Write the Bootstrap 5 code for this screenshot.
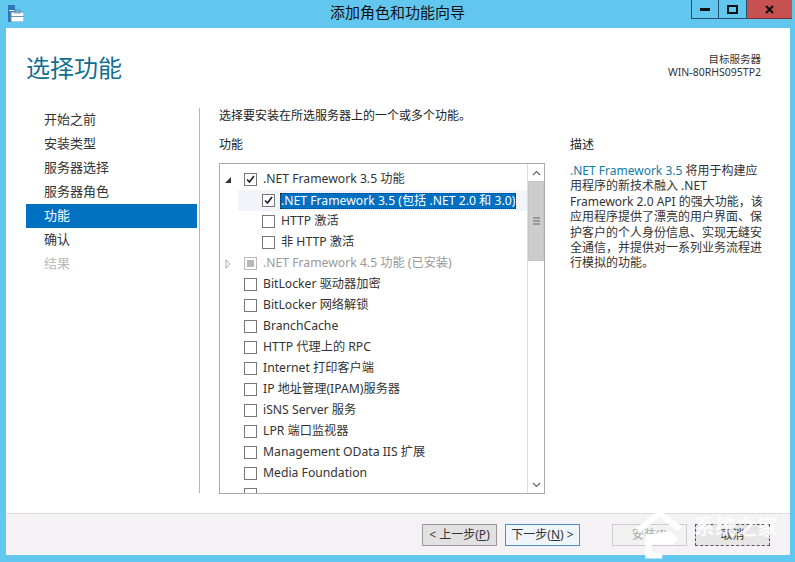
<!DOCTYPE html>
<html lang="zh">
<head>
<meta charset="utf-8">
<link href="https://cdn.jsdelivr.net/npm/bootstrap@5.3.0/dist/css/bootstrap.min.css" rel="stylesheet">
<style>
html,body{margin:0;height:562px;overflow:hidden}
body{font-family:"Noto Sans","Noto Sans CJK SC",sans-serif;font-size:12px;color:#222;background:#62c7ef;line-height:1}
.shell{width:795px;height:562px;position:relative}
.tbar{height:28px;background:#62c7ef}
.appicon{margin-left:8px;margin-top:5px;width:16px;height:17px;flex:none}
.wintitle{font-size:15px;color:#111;left:0;right:0;top:5px;text-align:center;position:absolute}
.wctrls{position:absolute;top:0;right:3px;display:flex;height:19px}
.wbtn{width:28px;border:1px solid #24506a;border-top:0;border-left-width:1px;display:flex;align-items:center;justify-content:center}
.wbtn+.wbtn{border-left:0}
.wbtn.closer{width:45px;background:#c75050;border:0;border-bottom:1px solid #7b3030;color:#111}
.pane{margin:0 5px 0 6px;height:486px;background:#fff;position:relative}
.top-head{height:80px;padding:25px 29px 0 20px}
.ptitle{font-size:24px;color:#106f90;line-height:28px;font-family:"Noto Sans CJK SC",sans-serif}
.server{font-size:10.5px;line-height:13px;text-align:right;color:#333;margin-top:0}
.body-area{height:406px}
.steps{width:171px;margin-left:20px;flex:none}
.stepitem{height:24px;padding-left:18px;font-size:13px;line-height:23px;color:#333}
.stepitem.on{background:#0070c0;color:#fff}
.stepitem.off{color:#bbb}
.vline{width:1px;height:385px;background:#b5b5b5;margin-left:2px;flex:none}
.main-area{padding-left:19px;width:326px;flex:none;box-sizing:content-box}
.intro{font-size:12px;line-height:14px;margin-top:1px;height:29px;white-space:nowrap}
.lab{font-size:12px;font-weight:400;line-height:14px;height:25px;color:#222}
.treebox{width:326px;height:331px;border:1px solid #aaa;overflow:hidden;display:flex;position:relative;background:#fff}
.treelist{flex:1;padding-top:5px;overflow:hidden}
.trow{height:21px;display:flex;align-items:center;font-size:12.2px;white-space:nowrap;color:#333;position:relative}
.trow.l1{padding-left:24px}
.trow.l2{padding-left:42px}
.trow.sel{background:#f1f4f9;margin-left:18px;padding-left:24px;width:290px}
.arrow{position:absolute;left:4px;top:6px;width:8px;height:10px}
.cb{width:13px;height:13px;border:1px solid #777;background:#fff;margin-right:6px;flex:none;display:flex;align-items:center;justify-content:center}
.cb.dis{border-color:#bbb}
.cb.dis::after{content:"";width:7px;height:7px;background:#b8b8b8}
.dim{color:#999}
.hl{background:#0070c0;color:#fff;height:16px;line-height:15px;padding:0 1px;margin-left:-1px;outline:1px dotted #222;outline-offset:-1px}
.sbar{width:17px;border-left:1px solid #ddd;background:#fff;display:flex;flex-direction:column;flex:none}
.sbtn{height:17px;display:flex;align-items:center;justify-content:center;flex:none}
.sthumb{height:80px;background:#cdcdcd;display:flex;align-items:center;justify-content:center;border:1px solid #c4c4c4;flex:none}
.strack{flex:1}
.descr{width:200px;margin-left:25px;flex:none}
.dtitle{font-size:12px;line-height:14px;height:25px;margin-top:30px;color:#222}
.dtext{font-size:12px;line-height:15.4px;color:#333;white-space:nowrap}
.dtext b{font-weight:400;color:#0f7aa3}
.foot{height:42px;background:#f4f2f5;border-top:1px solid #dcdcdc;position:absolute;left:0;right:0;top:486px;margin-top:-1px;padding:10px 20px 0 0}
.fbtn{width:75px;height:22px;font-size:12px;line-height:20px;text-align:center;border:1px solid #999;background:#e1e1e1;color:#333;padding:0;white-space:nowrap}
.fbtn.next{background:#eef5fb;border-color:#4d8fc9}
.fbtn.dis{background:#f2f2f2;border-color:#ccc;color:#aaa}
.fbtn.cancel{border:1px dashed #555;background:#e6e6e6}
.wm{position:absolute;left:633px;top:507px;display:flex;align-items:center;color:rgba(255,255,255,.85);font-weight:700;font-size:21px;line-height:1}
.wm svg{margin-right:9px;flex:none}
.wmtext{margin-top:-16px;white-space:nowrap}
</style>
</head>
<body>
<div class="shell">
  <div class="tbar d-flex">
    <svg class="appicon" viewBox="0 0 16 17"><rect x="0" y="0" width="7" height="17" fill="#2e76b8"/><rect x="1" y="5" width="5" height="1" fill="#fff"/><rect x="3" y="7" width="13" height="10" fill="#fff" stroke="#6a93b8"/><rect x="7" y="5" width="5" height="3" fill="none" stroke="#6a93b8"/><rect x="3" y="11" width="13" height="1" fill="#6a93b8"/></svg>
    <div class="wintitle">添加角色和功能向导</div>
    <div class="wctrls">
      <div class="wbtn"><svg width="10" height="4" viewBox="0 0 10 4"><rect width="10" height="3" y="1" fill="#111"/></svg></div>
      <div class="wbtn"><svg width="11" height="9" viewBox="0 0 11 9"><rect x="1" y="1" width="9" height="7" fill="none" stroke="#111" stroke-width="2"/></svg></div>
      <div class="wbtn closer"><svg width="9" height="9" viewBox="0 0 9 9"><path d="M1 1l7 7M8 1l-7 7" stroke="#111" stroke-width="2.2"/></svg></div>
    </div>
  </div>
  <div class="pane">
    <div class="top-head d-flex justify-content-between">
      <div class="ptitle">选择功能</div>
      <div class="server">目标服务器<br>WIN-80RHS095TP2</div>
    </div>
    <div class="body-area d-flex">
      <div class="steps">
        <div class="stepitem">开始之前</div>
        <div class="stepitem">安装类型</div>
        <div class="stepitem">服务器选择</div>
        <div class="stepitem">服务器角色</div>
        <div class="stepitem on">功能</div>
        <div class="stepitem">确认</div>
        <div class="stepitem off">结果</div>
      </div>
      <div class="vline"></div>
      <div class="main-area">
        <div class="intro">选择要安装在所选服务器上的一个或多个功能。</div>
        <div class="lab">功能</div>
        <div class="treebox">
          <div class="treelist">
            <div class="trow l1"><svg class="arrow" viewBox="0 0 8 10"><path d="M1 8h6V2z" fill="#333"/></svg><span class="cb"><svg width="11" height="11" viewBox="0 0 11 11"><path d="M2 5.5l2.5 2.5L9 2" fill="none" stroke="#222" stroke-width="1.7"/></svg></span>.NET Framework 3.5 功能</div>
            <div class="trow sel"><span class="cb"><svg width="11" height="11" viewBox="0 0 11 11"><path d="M2 5.5l2.5 2.5L9 2" fill="none" stroke="#222" stroke-width="1.7"/></svg></span><span class="hl">.NET Framework 3.5 (包括 .NET 2.0 和 3.0)</span></div>
            <div class="trow l2"><span class="cb"></span>HTTP 激活</div>
            <div class="trow l2"><span class="cb"></span>非 HTTP 激活</div>
            <div class="trow l1 dim"><svg class="arrow" viewBox="0 0 8 10"><path d="M2 1l4 4-4 4z" fill="none" stroke="#aaa"/></svg><span class="cb dis"></span>.NET Framework 4.5 功能 (已安装)</div>
            <div class="trow l1"><span class="cb"></span>BitLocker 驱动器加密</div>
            <div class="trow l1"><span class="cb"></span>BitLocker 网络解锁</div>
            <div class="trow l1"><span class="cb"></span>BranchCache</div>
            <div class="trow l1"><span class="cb"></span>HTTP 代理上的 RPC</div>
            <div class="trow l1"><span class="cb"></span>Internet 打印客户端</div>
            <div class="trow l1"><span class="cb"></span>IP 地址管理(IPAM)服务器</div>
            <div class="trow l1"><span class="cb"></span>iSNS Server 服务</div>
            <div class="trow l1"><span class="cb"></span>LPR 端口监视器</div>
            <div class="trow l1"><span class="cb"></span>Management OData IIS 扩展</div>
            <div class="trow l1"><span class="cb"></span>Media Foundation</div>
            <div class="trow l1"><span class="cb"></span></div>
          </div>
          <div class="sbar">
            <div class="sbtn"><svg width="9" height="6" viewBox="0 0 9 6"><path d="M1 5l3.5-3.5L8 5" fill="none" stroke="#666" stroke-width="1.2"/></svg></div>
            <div class="sthumb"><svg width="7" height="8" viewBox="0 0 7 8"><path d="M0 1h7M0 4h7M0 7h7" stroke="#666"/></svg></div>
            <div class="strack"></div>
            <div class="sbtn"><svg width="9" height="6" viewBox="0 0 9 6"><path d="M1 1l3.5 3.5L8 1" fill="none" stroke="#666" stroke-width="1.2"/></svg></div>
          </div>
        </div>
      </div>
      <div class="descr">
        <div class="dtitle">描述</div>
        <div class="dtext"><b>.NET Framework 3.5</b> 将用于构建应<br>用程序的新技术融入 .NET<br>Framework 2.0 API 的强大功能，该<br>应用程序提供了漂亮的用户界面、保<br>护客户的个人身份信息、实现无缝安<br>全通信，并提供对一系列业务流程进<br>行模拟的功能。</div>
      </div>
    </div>
    <div class="foot d-flex justify-content-end gap-2">
      <button class="fbtn" type="button">&lt; 上一步(<u>P</u>)</button>
      <button class="fbtn next me-4" type="button">下一步(<u>N</u>) &gt;</button>
      <button class="fbtn dis" type="button">安装(I)</button>
      <button class="fbtn cancel" type="button">取消</button>
    </div>
  </div>
  <div class="wm"><svg width="52" height="55" viewBox="0 0 55 55"><path d="M28 1L3 21l5 4L28 9l19 15 5-5zM13 28v25h18v-6H20v-9h23l5-6-8-8z" fill="#fff"/></svg><span class="wmtext">系统之家</span></div>
</div>
</body>
</html>
